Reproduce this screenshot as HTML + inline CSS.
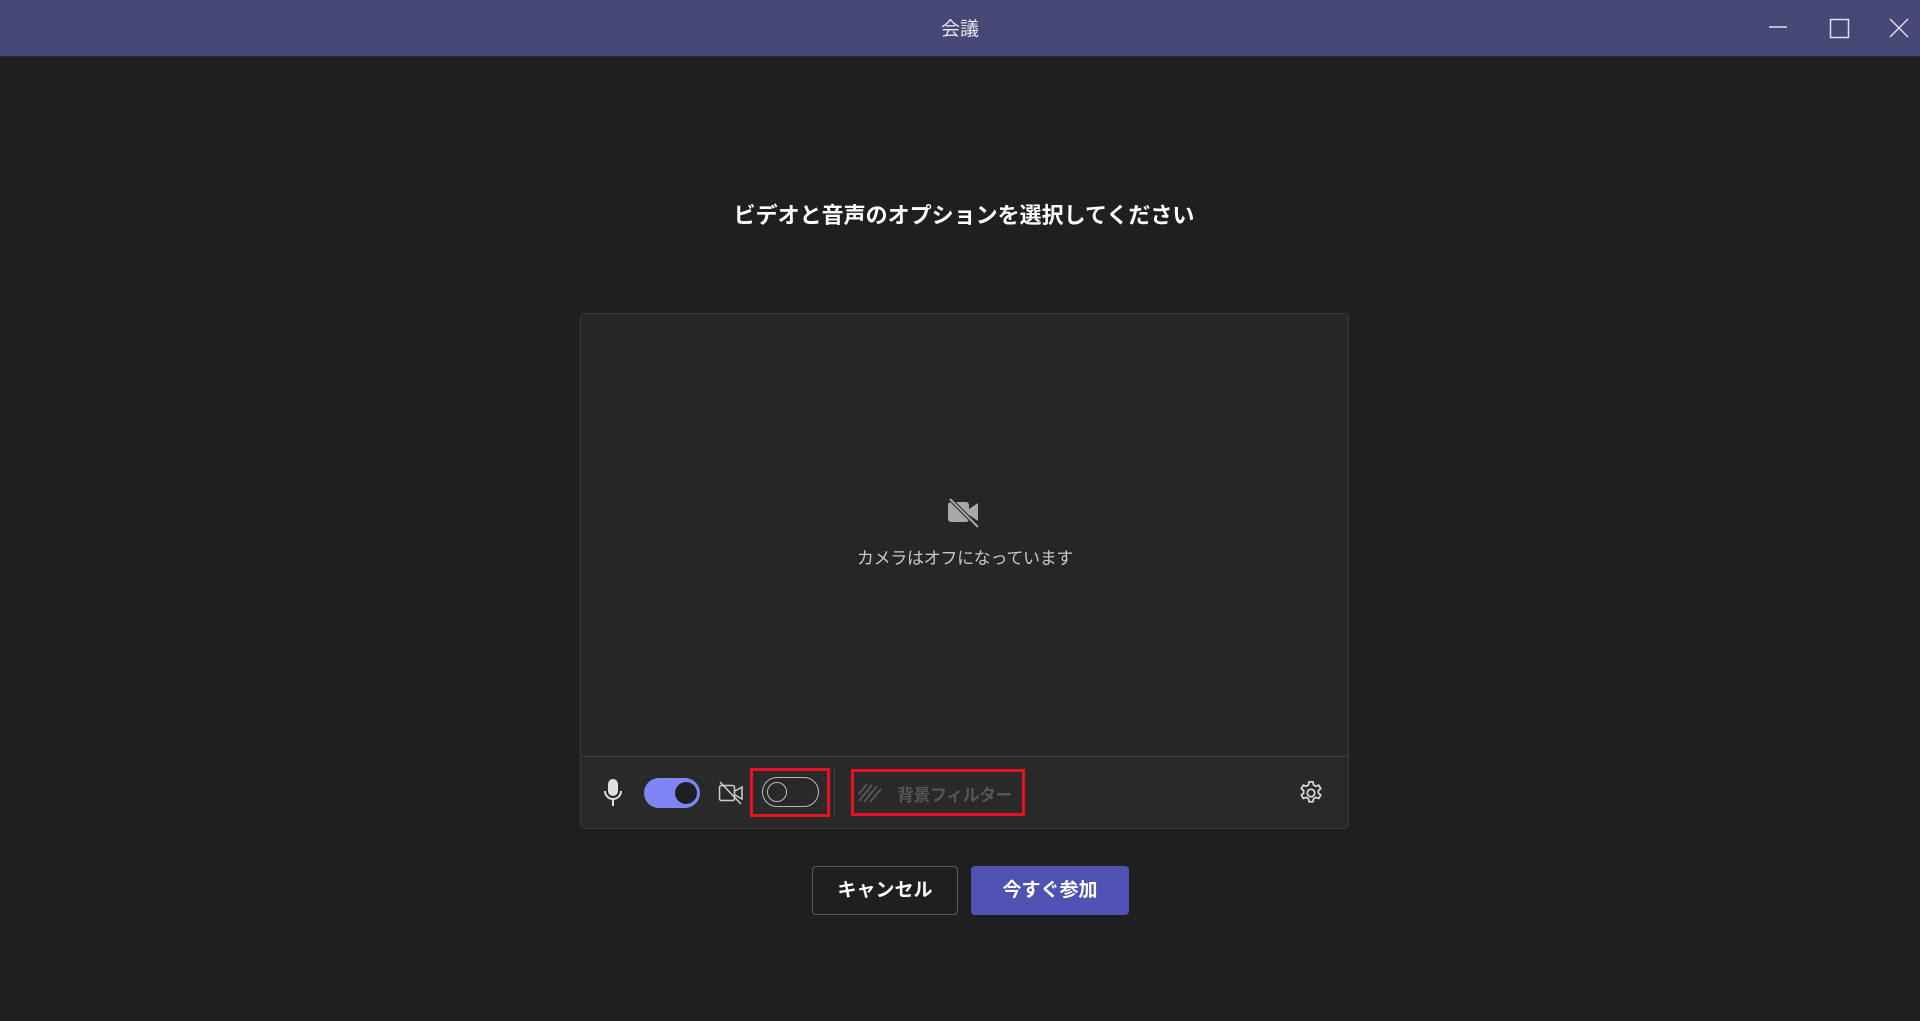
<!DOCTYPE html>
<html><head><meta charset="utf-8"><style>
*{margin:0;padding:0;box-sizing:border-box}
body{width:1920px;height:1021px;background:#1f1f1f;font-family:"Liberation Sans","Noto Sans CJK JP",sans-serif;position:relative;overflow:hidden;color:#fff}
.abs{position:absolute}
</style></head><body>
<div class="abs" style="left:0;top:0;width:1920px;height:57px;background:#464775;border-bottom:1px solid #2a2a40"></div>
<div class="abs" style="left:0;top:14px;width:1920px;text-align:center;font-size:19px;color:#e6e6f0">会議</div>
<svg class="abs" style="left:1760px;top:0" width="160" height="57" fill="none" stroke="#e0e0ea" stroke-width="1.5">
<line x1="9" y1="27" x2="27" y2="27"/>
<rect x="70.5" y="19.5" width="18" height="18"/>
<line x1="130" y1="19" x2="148" y2="37"/><line x1="148" y1="19" x2="130" y2="37"/>
</svg>
<div class="abs" style="left:4px;top:198px;width:1920px;text-align:center;font-size:22px;font-weight:bold">ビデオと音声のオプションを選択してください</div>
<div class="abs" style="left:580px;top:313px;width:769px;height:516px;background:#262626;border:1px solid #3a3a3a;border-radius:5px;overflow:hidden">
  <div class="abs" style="left:0;top:442px;width:769px;height:74px;background:#292929;border-top:1px solid #3d3d3d"></div>
</div>
<svg class="abs" style="left:947px;top:498px" width="34" height="30" viewBox="0 0 34 30">
<rect x="1" y="4" width="21" height="20" rx="3" fill="#a8a8a8"/>
<path d="M22 11 L31 5 V23 L22 17Z" fill="#a8a8a8"/>
<line x1="3" y1="1" x2="31" y2="29" stroke="#262626" stroke-width="4"/>
<line x1="3" y1="1" x2="31" y2="29" stroke="#a8a8a8" stroke-width="2"/>
</svg>
<div class="abs" style="left:0;top:544px;width:1930px;text-align:center;font-size:17px;color:#c8c8c8;letter-spacing:-0.3px">カメラはオフになっています</div>
<svg class="abs" style="left:603px;top:779px" width="20" height="28" fill="none" stroke="#e0e0e0" stroke-width="2">
<rect x="6" y="1" width="8" height="15" rx="4" fill="#e0e0e0"/>
<path d="M2 12 a8 8 0 0 0 16 0"/><line x1="10" y1="20" x2="10" y2="27"/>
</svg>
<div class="abs" style="left:644px;top:778px;width:56px;height:30px;border-radius:15px;background:#7f85f5"></div>
<div class="abs" style="left:675px;top:782px;width:22px;height:22px;border-radius:50%;background:#1f1f1f"></div>
<svg class="abs" style="left:718px;top:780px" width="26" height="26" fill="none" stroke="#d0d0d0" stroke-width="1.5">
<rect x="1.5" y="5.5" width="15" height="15" rx="2"/><path d="M17 11 L24 7 V19 L17 15"/>
<line x1="2" y1="2" x2="23" y2="24"/>
</svg>
<div class="abs" style="left:750px;top:768px;width:80px;height:49px;border:3px solid #e81123"></div>
<div class="abs" style="left:762px;top:777px;width:57px;height:30px;border:1.5px solid #bbb;border-radius:15px"></div>
<div class="abs" style="left:767px;top:782px;width:20px;height:20px;border:1.5px solid #bbb;border-radius:50%"></div>
<div class="abs" style="left:834px;top:768px;width:1px;height:49px;background:#444"></div>
<div class="abs" style="left:851px;top:769px;width:174px;height:47px;border:3px solid #e81123"></div>
<svg class="abs" style="left:858px;top:782px" width="24" height="22" stroke="#555" stroke-width="2">
<line x1="1" y1="12" x2="9" y2="2"/><line x1="1" y1="19" x2="14" y2="3"/><line x1="6" y1="20" x2="19" y2="4"/><line x1="12" y1="20" x2="23" y2="7"/>
</svg>
<div class="abs" style="left:897px;top:781px;font-size:17px;font-weight:bold;color:#555;letter-spacing:-0.5px">背景フィルター</div>
<svg class="abs" style="left:1297px;top:779px" width="28" height="28" viewBox="0 0 24 24" fill="none" stroke="#d8d8d8" stroke-width="1.5">
<circle cx="12" cy="12" r="3.2"/>
<path d="M10.3 2.5h3.4l.5 2.6 1.9 1.1 2.5-.9 1.7 2.9-2 1.7v2.2l2 1.7-1.7 2.9-2.5-.9-1.9 1.1-.5 2.6h-3.4l-.5-2.6-1.9-1.1-2.5.9-1.7-2.9 2-1.7v-2.2l-2-1.7 1.7-2.9 2.5.9 1.9-1.1z"/>
</svg>
<div class="abs" style="left:812px;top:866px;width:146px;height:49px;border:1px solid #5a5a5a;border-radius:4px;text-align:center;line-height:47px;font-size:19px;font-weight:bold">キャンセル</div>
<div class="abs" style="left:971px;top:866px;width:158px;height:49px;background:#4f52b2;border-radius:4px;text-align:center;line-height:49px;font-size:19px;font-weight:bold">今すぐ参加</div>
</body></html>
